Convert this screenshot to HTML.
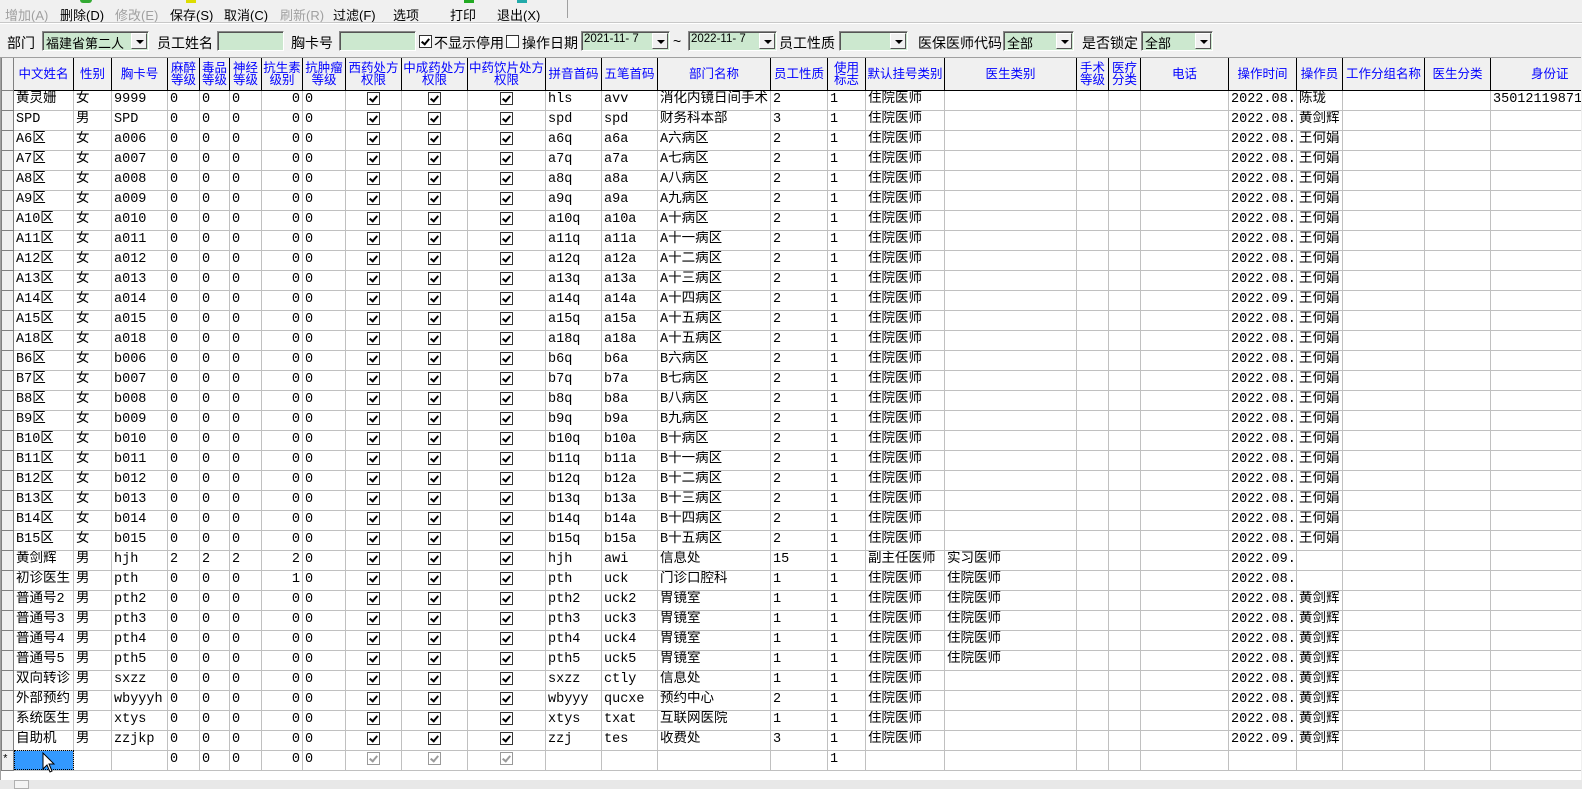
<!DOCTYPE html>
<html><head><meta charset="utf-8"><style>
*{margin:0;padding:0;box-sizing:border-box}
body{width:1582px;height:789px;background:#f0f0f0;position:relative;overflow:hidden;font-family:"Liberation Mono","Noto Sans CJK SC",monospace;font-size:13.5px;color:#000}
.ab{position:absolute;white-space:nowrap}
.tb{top:5px;font-family:"Liberation Sans","Noto Sans CJK SC",sans-serif;font-size:13px}
.dis{color:#a0a0a0}
.lbl{font-family:"Liberation Sans","Noto Sans CJK SC",sans-serif;font-size:14px;top:33px}
.inp{top:31px;height:20px;background:#cce8cf;border:1px solid #888;border-right-color:#fff;border-bottom-color:#fff;box-shadow:inset 1px 1px 0 #555;font-size:13px;padding:1px 3px;overflow:hidden;font-family:"Liberation Sans","Noto Sans CJK SC",sans-serif}
.dd{position:absolute;right:1px;top:1px;width:16px;height:16px;background:#f0f0f0;border:1px solid #fff;border-right-color:#555;border-bottom-color:#555}
.dd:after{content:"";position:absolute;left:4px;top:6px;border:4px solid transparent;border-top:4px solid #000;border-bottom:0}
.cb{width:13px;height:13px;border:1px solid #333;background:#fff;top:35px}
.cb.on:after,.ck:after{content:"";position:absolute;left:3px;top:1px;width:3px;height:6px;border:solid #000;border-width:0 2px 2px 0;transform:rotate(40deg)}
#grid{position:absolute;left:0;top:57px;width:1581px;height:723px;background:#fff;border-top:1px solid #a0a0a0;border-left:1px solid #a0a0a0;overflow:hidden}
table{border-collapse:collapse;table-layout:fixed;width:1640px}
td{height:20px;border:1px solid #c0c0c0;white-space:nowrap;overflow:hidden;padding:0 2px;line-height:18px;vertical-align:middle}
th{height:32px;background:#f0f0f0;border:1px solid #000;border-top:none;color:#0000ff;font-weight:normal;font-family:"Liberation Sans","Noto Sans CJK SC",sans-serif;font-size:12.5px;line-height:12px;white-space:nowrap;overflow:hidden}
td.h,th.h{background:#f0f0f0;border-color:#808080;padding:0;color:#000;font-size:11px}
td.r{text-align:right}
td.c{text-align:center}
.ck{display:inline-block;position:relative;width:13px;height:13px;border:1px solid #333;background:#fff;vertical-align:middle}
.g .ck{border-color:#999}.g .ck:after{border-color:#999}
.sel{background:#3399ff;outline:1px dotted #000;outline-offset:-1px}
</style></head><body>
<div class="ab tb dis" style="left:5px">增加(A)</div>
<div class="ab tb" style="left:60px">删除(D)</div>
<div class="ab tb dis" style="left:115px">修改(E)</div>
<div class="ab tb" style="left:170px">保存(S)</div>
<div class="ab tb" style="left:224px">取消(C)</div>
<div class="ab tb dis" style="left:280px">刷新(R)</div>
<div class="ab tb" style="left:333px">过滤(F)</div>
<div class="ab tb" style="left:393px">选项</div>
<div class="ab tb" style="left:450px">打印</div>
<div class="ab tb" style="left:497px">退出(X)</div>
<div class="ab" style="left:80px;top:0;width:12px;height:3px;background:#3a3;border-radius:0 0 6px 6px"></div>
<div class="ab" style="left:186px;top:0;width:10px;height:3px;background:#dd0"></div>
<div class="ab" style="left:464px;top:0;width:10px;height:3px;background:#2a2"></div>
<div class="ab" style="left:517px;top:0;width:10px;height:3px;background:#2aa"></div>
<div class="ab" style="left:567px;top:0;width:1px;height:18px;background:#a0a0a0"></div>
<div class="ab" style="left:0;top:22px;width:1582px;height:1px;background:#c8c8c8"></div>
<div class="ab" style="left:0;top:23px;width:1582px;height:1px;background:#fff"></div>

<div class="ab lbl" style="left:7px">部门</div>
<div class="ab inp" style="left:42px;width:107px">福建省第二人<span class="dd"></span></div>
<div class="ab lbl" style="left:157px">员工姓名</div>
<div class="ab inp" style="left:217px;width:67px"></div>
<div class="ab lbl" style="left:291px">胸卡号</div>
<div class="ab inp" style="left:339px;width:77px"></div>
<div class="ab cb on" style="left:419px"></div>
<div class="ab lbl" style="left:434px">不显示停用</div>
<div class="ab cb" style="left:506px"></div>
<div class="ab lbl" style="left:522px">操作日期</div>
<div class="ab inp" style="left:581px;width:89px;font-size:11.5px;padding-left:2px">2021-11- 7<span class="dd"></span></div>
<div class="ab lbl" style="left:673px">~</div>
<div class="ab inp" style="left:688px;width:89px;font-size:11.5px;padding-left:2px">2022-11- 7<span class="dd"></span></div>
<div class="ab lbl" style="left:779px">员工性质</div>
<div class="ab inp" style="left:839px;width:69px"><span class="dd"></span></div>
<div class="ab lbl" style="left:918px">医保医师代码</div>
<div class="ab inp" style="left:1003px;width:71px">全部<span class="dd"></span></div>
<div class="ab lbl" style="left:1082px">是否锁定</div>
<div class="ab inp" style="left:1141px;width:72px">全部<span class="dd"></span></div>

<div id="grid"><table>
<colgroup><col style="width:12px"><col style="width:60px"><col style="width:38px"><col style="width:56px"><col style="width:32px"><col style="width:30px"><col style="width:32px"><col style="width:41px"><col style="width:43px"><col style="width:56px"><col style="width:66px"><col style="width:78px"><col style="width:56px"><col style="width:56px"><col style="width:113px"><col style="width:57px"><col style="width:38px"><col style="width:79px"><col style="width:132px"><col style="width:32px"><col style="width:32px"><col style="width:88px"><col style="width:68px"><col style="width:46px"><col style="width:82px"><col style="width:66px"><col style="width:150px"></colgroup>
<tr><th class="h"></th><th>中文姓名</th><th>性别</th><th>胸卡号</th><th>麻醉<br>等级</th><th>毒品<br>等级</th><th>神经<br>等级</th><th>抗生素<br>级别</th><th>抗肿瘤<br>等级</th><th>西药处方<br>权限</th><th>中成药处方<br>权限</th><th>中药饮片处方<br>权限</th><th>拼音首码</th><th>五笔首码</th><th>部门名称</th><th>员工性质</th><th>使用<br>标志</th><th>默认挂号类别</th><th>医生类别</th><th>手术<br>等级</th><th>医疗<br>分类</th><th>电话</th><th>操作时间</th><th>操作员</th><th>工作分组名称</th><th>医生分类</th><th style="text-align:left;padding-left:40px">身份证</th></tr>
<tr><td class="h"></td><td>黄灵姗</td><td>女</td><td>9999</td><td>0</td><td>0</td><td>0</td><td class="r">0</td><td>0</td><td class="c"><i class="ck"></i></td><td class="c"><i class="ck"></i></td><td class="c"><i class="ck"></i></td><td>hls</td><td>avv</td><td>消化内镜日间手术</td><td>2</td><td>1</td><td>住院医师</td><td></td><td></td><td></td><td></td><td>2022.08.</td><td>陈珑</td><td></td><td></td><td>35012119871</td></tr>
<tr><td class="h"></td><td>SPD</td><td>男</td><td>SPD</td><td>0</td><td>0</td><td>0</td><td class="r">0</td><td>0</td><td class="c"><i class="ck"></i></td><td class="c"><i class="ck"></i></td><td class="c"><i class="ck"></i></td><td>spd</td><td>spd</td><td>财务科本部</td><td>3</td><td>1</td><td>住院医师</td><td></td><td></td><td></td><td></td><td>2022.08.</td><td>黄剑辉</td><td></td><td></td><td></td></tr>
<tr><td class="h"></td><td>A6区</td><td>女</td><td>a006</td><td>0</td><td>0</td><td>0</td><td class="r">0</td><td>0</td><td class="c"><i class="ck"></i></td><td class="c"><i class="ck"></i></td><td class="c"><i class="ck"></i></td><td>a6q</td><td>a6a</td><td>A六病区</td><td>2</td><td>1</td><td>住院医师</td><td></td><td></td><td></td><td></td><td>2022.08.</td><td>王何娟</td><td></td><td></td><td></td></tr>
<tr><td class="h"></td><td>A7区</td><td>女</td><td>a007</td><td>0</td><td>0</td><td>0</td><td class="r">0</td><td>0</td><td class="c"><i class="ck"></i></td><td class="c"><i class="ck"></i></td><td class="c"><i class="ck"></i></td><td>a7q</td><td>a7a</td><td>A七病区</td><td>2</td><td>1</td><td>住院医师</td><td></td><td></td><td></td><td></td><td>2022.08.</td><td>王何娟</td><td></td><td></td><td></td></tr>
<tr><td class="h"></td><td>A8区</td><td>女</td><td>a008</td><td>0</td><td>0</td><td>0</td><td class="r">0</td><td>0</td><td class="c"><i class="ck"></i></td><td class="c"><i class="ck"></i></td><td class="c"><i class="ck"></i></td><td>a8q</td><td>a8a</td><td>A八病区</td><td>2</td><td>1</td><td>住院医师</td><td></td><td></td><td></td><td></td><td>2022.08.</td><td>王何娟</td><td></td><td></td><td></td></tr>
<tr><td class="h"></td><td>A9区</td><td>女</td><td>a009</td><td>0</td><td>0</td><td>0</td><td class="r">0</td><td>0</td><td class="c"><i class="ck"></i></td><td class="c"><i class="ck"></i></td><td class="c"><i class="ck"></i></td><td>a9q</td><td>a9a</td><td>A九病区</td><td>2</td><td>1</td><td>住院医师</td><td></td><td></td><td></td><td></td><td>2022.08.</td><td>王何娟</td><td></td><td></td><td></td></tr>
<tr><td class="h"></td><td>A10区</td><td>女</td><td>a010</td><td>0</td><td>0</td><td>0</td><td class="r">0</td><td>0</td><td class="c"><i class="ck"></i></td><td class="c"><i class="ck"></i></td><td class="c"><i class="ck"></i></td><td>a10q</td><td>a10a</td><td>A十病区</td><td>2</td><td>1</td><td>住院医师</td><td></td><td></td><td></td><td></td><td>2022.08.</td><td>王何娟</td><td></td><td></td><td></td></tr>
<tr><td class="h"></td><td>A11区</td><td>女</td><td>a011</td><td>0</td><td>0</td><td>0</td><td class="r">0</td><td>0</td><td class="c"><i class="ck"></i></td><td class="c"><i class="ck"></i></td><td class="c"><i class="ck"></i></td><td>a11q</td><td>a11a</td><td>A十一病区</td><td>2</td><td>1</td><td>住院医师</td><td></td><td></td><td></td><td></td><td>2022.08.</td><td>王何娟</td><td></td><td></td><td></td></tr>
<tr><td class="h"></td><td>A12区</td><td>女</td><td>a012</td><td>0</td><td>0</td><td>0</td><td class="r">0</td><td>0</td><td class="c"><i class="ck"></i></td><td class="c"><i class="ck"></i></td><td class="c"><i class="ck"></i></td><td>a12q</td><td>a12a</td><td>A十二病区</td><td>2</td><td>1</td><td>住院医师</td><td></td><td></td><td></td><td></td><td>2022.08.</td><td>王何娟</td><td></td><td></td><td></td></tr>
<tr><td class="h"></td><td>A13区</td><td>女</td><td>a013</td><td>0</td><td>0</td><td>0</td><td class="r">0</td><td>0</td><td class="c"><i class="ck"></i></td><td class="c"><i class="ck"></i></td><td class="c"><i class="ck"></i></td><td>a13q</td><td>a13a</td><td>A十三病区</td><td>2</td><td>1</td><td>住院医师</td><td></td><td></td><td></td><td></td><td>2022.08.</td><td>王何娟</td><td></td><td></td><td></td></tr>
<tr><td class="h"></td><td>A14区</td><td>女</td><td>a014</td><td>0</td><td>0</td><td>0</td><td class="r">0</td><td>0</td><td class="c"><i class="ck"></i></td><td class="c"><i class="ck"></i></td><td class="c"><i class="ck"></i></td><td>a14q</td><td>a14a</td><td>A十四病区</td><td>2</td><td>1</td><td>住院医师</td><td></td><td></td><td></td><td></td><td>2022.09.</td><td>王何娟</td><td></td><td></td><td></td></tr>
<tr><td class="h"></td><td>A15区</td><td>女</td><td>a015</td><td>0</td><td>0</td><td>0</td><td class="r">0</td><td>0</td><td class="c"><i class="ck"></i></td><td class="c"><i class="ck"></i></td><td class="c"><i class="ck"></i></td><td>a15q</td><td>a15a</td><td>A十五病区</td><td>2</td><td>1</td><td>住院医师</td><td></td><td></td><td></td><td></td><td>2022.08.</td><td>王何娟</td><td></td><td></td><td></td></tr>
<tr><td class="h"></td><td>A18区</td><td>女</td><td>a018</td><td>0</td><td>0</td><td>0</td><td class="r">0</td><td>0</td><td class="c"><i class="ck"></i></td><td class="c"><i class="ck"></i></td><td class="c"><i class="ck"></i></td><td>a18q</td><td>a18a</td><td>A十五病区</td><td>2</td><td>1</td><td>住院医师</td><td></td><td></td><td></td><td></td><td>2022.08.</td><td>王何娟</td><td></td><td></td><td></td></tr>
<tr><td class="h"></td><td>B6区</td><td>女</td><td>b006</td><td>0</td><td>0</td><td>0</td><td class="r">0</td><td>0</td><td class="c"><i class="ck"></i></td><td class="c"><i class="ck"></i></td><td class="c"><i class="ck"></i></td><td>b6q</td><td>b6a</td><td>B六病区</td><td>2</td><td>1</td><td>住院医师</td><td></td><td></td><td></td><td></td><td>2022.08.</td><td>王何娟</td><td></td><td></td><td></td></tr>
<tr><td class="h"></td><td>B7区</td><td>女</td><td>b007</td><td>0</td><td>0</td><td>0</td><td class="r">0</td><td>0</td><td class="c"><i class="ck"></i></td><td class="c"><i class="ck"></i></td><td class="c"><i class="ck"></i></td><td>b7q</td><td>b7a</td><td>B七病区</td><td>2</td><td>1</td><td>住院医师</td><td></td><td></td><td></td><td></td><td>2022.08.</td><td>王何娟</td><td></td><td></td><td></td></tr>
<tr><td class="h"></td><td>B8区</td><td>女</td><td>b008</td><td>0</td><td>0</td><td>0</td><td class="r">0</td><td>0</td><td class="c"><i class="ck"></i></td><td class="c"><i class="ck"></i></td><td class="c"><i class="ck"></i></td><td>b8q</td><td>b8a</td><td>B八病区</td><td>2</td><td>1</td><td>住院医师</td><td></td><td></td><td></td><td></td><td>2022.08.</td><td>王何娟</td><td></td><td></td><td></td></tr>
<tr><td class="h"></td><td>B9区</td><td>女</td><td>b009</td><td>0</td><td>0</td><td>0</td><td class="r">0</td><td>0</td><td class="c"><i class="ck"></i></td><td class="c"><i class="ck"></i></td><td class="c"><i class="ck"></i></td><td>b9q</td><td>b9a</td><td>B九病区</td><td>2</td><td>1</td><td>住院医师</td><td></td><td></td><td></td><td></td><td>2022.08.</td><td>王何娟</td><td></td><td></td><td></td></tr>
<tr><td class="h"></td><td>B10区</td><td>女</td><td>b010</td><td>0</td><td>0</td><td>0</td><td class="r">0</td><td>0</td><td class="c"><i class="ck"></i></td><td class="c"><i class="ck"></i></td><td class="c"><i class="ck"></i></td><td>b10q</td><td>b10a</td><td>B十病区</td><td>2</td><td>1</td><td>住院医师</td><td></td><td></td><td></td><td></td><td>2022.08.</td><td>王何娟</td><td></td><td></td><td></td></tr>
<tr><td class="h"></td><td>B11区</td><td>女</td><td>b011</td><td>0</td><td>0</td><td>0</td><td class="r">0</td><td>0</td><td class="c"><i class="ck"></i></td><td class="c"><i class="ck"></i></td><td class="c"><i class="ck"></i></td><td>b11q</td><td>b11a</td><td>B十一病区</td><td>2</td><td>1</td><td>住院医师</td><td></td><td></td><td></td><td></td><td>2022.08.</td><td>王何娟</td><td></td><td></td><td></td></tr>
<tr><td class="h"></td><td>B12区</td><td>女</td><td>b012</td><td>0</td><td>0</td><td>0</td><td class="r">0</td><td>0</td><td class="c"><i class="ck"></i></td><td class="c"><i class="ck"></i></td><td class="c"><i class="ck"></i></td><td>b12q</td><td>b12a</td><td>B十二病区</td><td>2</td><td>1</td><td>住院医师</td><td></td><td></td><td></td><td></td><td>2022.08.</td><td>王何娟</td><td></td><td></td><td></td></tr>
<tr><td class="h"></td><td>B13区</td><td>女</td><td>b013</td><td>0</td><td>0</td><td>0</td><td class="r">0</td><td>0</td><td class="c"><i class="ck"></i></td><td class="c"><i class="ck"></i></td><td class="c"><i class="ck"></i></td><td>b13q</td><td>b13a</td><td>B十三病区</td><td>2</td><td>1</td><td>住院医师</td><td></td><td></td><td></td><td></td><td>2022.08.</td><td>王何娟</td><td></td><td></td><td></td></tr>
<tr><td class="h"></td><td>B14区</td><td>女</td><td>b014</td><td>0</td><td>0</td><td>0</td><td class="r">0</td><td>0</td><td class="c"><i class="ck"></i></td><td class="c"><i class="ck"></i></td><td class="c"><i class="ck"></i></td><td>b14q</td><td>b14a</td><td>B十四病区</td><td>2</td><td>1</td><td>住院医师</td><td></td><td></td><td></td><td></td><td>2022.08.</td><td>王何娟</td><td></td><td></td><td></td></tr>
<tr><td class="h"></td><td>B15区</td><td>女</td><td>b015</td><td>0</td><td>0</td><td>0</td><td class="r">0</td><td>0</td><td class="c"><i class="ck"></i></td><td class="c"><i class="ck"></i></td><td class="c"><i class="ck"></i></td><td>b15q</td><td>b15a</td><td>B十五病区</td><td>2</td><td>1</td><td>住院医师</td><td></td><td></td><td></td><td></td><td>2022.08.</td><td>王何娟</td><td></td><td></td><td></td></tr>
<tr><td class="h"></td><td>黄剑辉</td><td>男</td><td>hjh</td><td>2</td><td>2</td><td>2</td><td class="r">2</td><td>0</td><td class="c"><i class="ck"></i></td><td class="c"><i class="ck"></i></td><td class="c"><i class="ck"></i></td><td>hjh</td><td>awi</td><td>信息处</td><td>15</td><td>1</td><td>副主任医师</td><td>实习医师</td><td></td><td></td><td></td><td>2022.09.</td><td></td><td></td><td></td><td></td></tr>
<tr><td class="h"></td><td>初诊医生</td><td>男</td><td>pth</td><td>0</td><td>0</td><td>0</td><td class="r">1</td><td>0</td><td class="c"><i class="ck"></i></td><td class="c"><i class="ck"></i></td><td class="c"><i class="ck"></i></td><td>pth</td><td>uck</td><td>门诊口腔科</td><td>1</td><td>1</td><td>住院医师</td><td>住院医师</td><td></td><td></td><td></td><td>2022.08.</td><td></td><td></td><td></td><td></td></tr>
<tr><td class="h"></td><td>普通号2</td><td>男</td><td>pth2</td><td>0</td><td>0</td><td>0</td><td class="r">0</td><td>0</td><td class="c"><i class="ck"></i></td><td class="c"><i class="ck"></i></td><td class="c"><i class="ck"></i></td><td>pth2</td><td>uck2</td><td>胃镜室</td><td>1</td><td>1</td><td>住院医师</td><td>住院医师</td><td></td><td></td><td></td><td>2022.08.</td><td>黄剑辉</td><td></td><td></td><td></td></tr>
<tr><td class="h"></td><td>普通号3</td><td>男</td><td>pth3</td><td>0</td><td>0</td><td>0</td><td class="r">0</td><td>0</td><td class="c"><i class="ck"></i></td><td class="c"><i class="ck"></i></td><td class="c"><i class="ck"></i></td><td>pth3</td><td>uck3</td><td>胃镜室</td><td>1</td><td>1</td><td>住院医师</td><td>住院医师</td><td></td><td></td><td></td><td>2022.08.</td><td>黄剑辉</td><td></td><td></td><td></td></tr>
<tr><td class="h"></td><td>普通号4</td><td>男</td><td>pth4</td><td>0</td><td>0</td><td>0</td><td class="r">0</td><td>0</td><td class="c"><i class="ck"></i></td><td class="c"><i class="ck"></i></td><td class="c"><i class="ck"></i></td><td>pth4</td><td>uck4</td><td>胃镜室</td><td>1</td><td>1</td><td>住院医师</td><td>住院医师</td><td></td><td></td><td></td><td>2022.08.</td><td>黄剑辉</td><td></td><td></td><td></td></tr>
<tr><td class="h"></td><td>普通号5</td><td>男</td><td>pth5</td><td>0</td><td>0</td><td>0</td><td class="r">0</td><td>0</td><td class="c"><i class="ck"></i></td><td class="c"><i class="ck"></i></td><td class="c"><i class="ck"></i></td><td>pth5</td><td>uck5</td><td>胃镜室</td><td>1</td><td>1</td><td>住院医师</td><td>住院医师</td><td></td><td></td><td></td><td>2022.08.</td><td>黄剑辉</td><td></td><td></td><td></td></tr>
<tr><td class="h"></td><td>双向转诊</td><td>男</td><td>sxzz</td><td>0</td><td>0</td><td>0</td><td class="r">0</td><td>0</td><td class="c"><i class="ck"></i></td><td class="c"><i class="ck"></i></td><td class="c"><i class="ck"></i></td><td>sxzz</td><td>ctly</td><td>信息处</td><td>1</td><td>1</td><td>住院医师</td><td></td><td></td><td></td><td></td><td>2022.08.</td><td>黄剑辉</td><td></td><td></td><td></td></tr>
<tr><td class="h"></td><td>外部预约</td><td>男</td><td>wbyyyh</td><td>0</td><td>0</td><td>0</td><td class="r">0</td><td>0</td><td class="c"><i class="ck"></i></td><td class="c"><i class="ck"></i></td><td class="c"><i class="ck"></i></td><td>wbyyy</td><td>qucxe</td><td>预约中心</td><td>2</td><td>1</td><td>住院医师</td><td></td><td></td><td></td><td></td><td>2022.08.</td><td>黄剑辉</td><td></td><td></td><td></td></tr>
<tr><td class="h"></td><td>系统医生</td><td>男</td><td>xtys</td><td>0</td><td>0</td><td>0</td><td class="r">0</td><td>0</td><td class="c"><i class="ck"></i></td><td class="c"><i class="ck"></i></td><td class="c"><i class="ck"></i></td><td>xtys</td><td>txat</td><td>互联网医院</td><td>1</td><td>1</td><td>住院医师</td><td></td><td></td><td></td><td></td><td>2022.08.</td><td>黄剑辉</td><td></td><td></td><td></td></tr>
<tr><td class="h"></td><td>自助机</td><td>男</td><td>zzjkp</td><td>0</td><td>0</td><td>0</td><td class="r">0</td><td>0</td><td class="c"><i class="ck"></i></td><td class="c"><i class="ck"></i></td><td class="c"><i class="ck"></i></td><td>zzj</td><td>tes</td><td>收费处</td><td>3</td><td>1</td><td>住院医师</td><td></td><td></td><td></td><td></td><td>2022.09.</td><td>黄剑辉</td><td></td><td></td><td></td></tr>
<tr class="g"><td class="h">*</td><td class="sel"></td><td></td><td></td><td>0</td><td>0</td><td>0</td><td class="r">0</td><td>0</td><td class="c"><i class="ck"></i></td><td class="c"><i class="ck"></i></td><td class="c"><i class="ck"></i></td><td></td><td></td><td></td><td></td><td>1</td><td></td><td></td><td></td><td></td><td></td><td></td><td></td><td></td><td></td><td></td></tr>
</table></div>
<div class="ab" style="left:0;top:780px;width:1582px;height:9px;background:#e8e8e8"></div>
<div class="ab" style="left:14px;top:780px;width:15px;height:9px;background:#f4f4f4;border:1px solid #b0b0b0"></div>
<svg class="ab" style="left:42px;top:752px" width="14" height="22" viewBox="0 0 14 22"><path d="M1 1 L1 17 L5 13 L8 20 L10 19 L7 12 L12 12 Z" fill="#fff" stroke="#000" stroke-width="1"/></svg>
</body></html>
